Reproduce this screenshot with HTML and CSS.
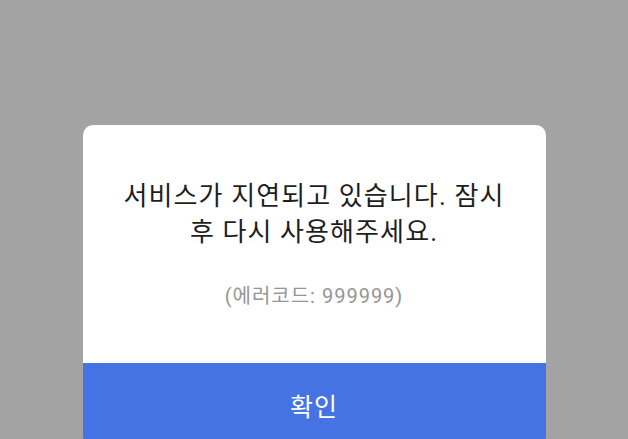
FILE: index.html
```html
<!DOCTYPE html>
<html lang="ko">

<head>
    <meta charset="UTF-8">
    <meta name="viewport" content="width=device-width, initial-scale=1.0">
    <title>알림</title>
    <link rel="stylesheet" href="styles.css">
</head>

<body>
    <div class="dialog">
        <div class="dialog-body">
            <p class="message">서비스가 지연되고 있습니다. 잠시 후 다시 사용해주세요.</p>
            <p class="error-code">(에러코드: 999999)</p>
        </div>
        <button class="confirm">확인</button>
    </div>
</body>

</html>
```

FILE: styles.css
```css
body {
    font-family: Roboto, "Noto Sans CJK KR", sans-serif;
    background-color: #a3a3a3;
    margin: 0;
    height: 439px;
    overflow: hidden;
    display: flex;
    justify-content: center;
}

.dialog {
    width: 463px;
    margin-top: 125px;
    background-color: #fff;
    border-radius: 10px;
    overflow: hidden;
    align-self: flex-start;
}

.dialog-body {
    padding: 53px 26px 54px;
    text-align: center;
}

.message {
    margin: 0;
    font-size: 26px;
    line-height: 36px;
    letter-spacing: 1.1px;
    color: #1e1e1e;
}

.error-code {
    margin: 33px 0 0;
    font-size: 20px;
    line-height: 26px;
    letter-spacing: 1px;
    color: #959595;
}

.confirm {
    display: block;
    width: 100%;
    height: 84px;
    border: none;
    background-color: #4673e3;
    color: #fff;
    font-family: inherit;
    font-size: 25px;
    letter-spacing: 1px;
    cursor: pointer;
}
```
